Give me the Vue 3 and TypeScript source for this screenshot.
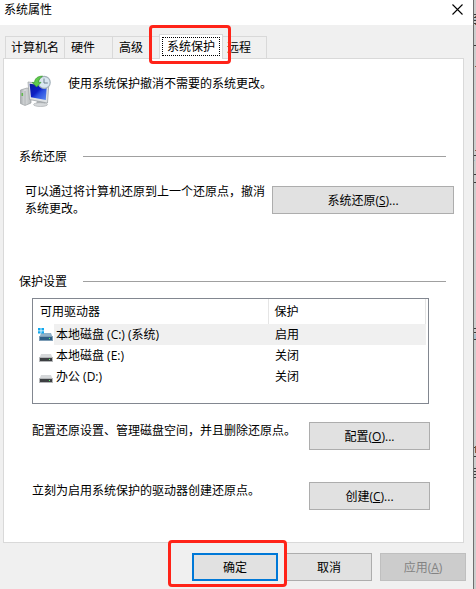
<script setup lang="ts">
import { ref } from 'vue'

interface Drive {
  name: string
  status: string
  system: boolean
}

const tabs: string[] = ['计算机名', '硬件', '高级', '系统保护', '远程']
const activeTab = ref(3)

const drives: Drive[] = [
  { name: '本地磁盘 (C:) (系统)', status: '启用', system: true },
  { name: '本地磁盘 (E:)', status: '关闭', system: false },
  { name: '办公 (D:)', status: '关闭', system: false },
]
const selected = ref(0)
</script>

<template>
  <div class="screen" lang="zh-CN">
    <main class="window">
      <header class="titlebar">
        <h1 class="title">系统属性</h1>
        <button class="close" type="button" aria-label="关闭">
          <svg width="11" height="11" viewBox="0 0 11 11">
            <path d="M0.5 0.5L10.5 10.5M10.5 0.5L0.5 10.5" fill="none" stroke="#000" stroke-width="1.1" />
          </svg>
        </button>
      </header>

      <nav class="tabs" role="tablist">
        <button
          v-for="(tab, i) in tabs"
          :key="tab"
          class="tab"
          :class="{ active: i === activeTab }"
          type="button"
          role="tab"
          :aria-selected="i === activeTab"
          @click="activeTab = i"
        >
          <span class="tab-label">{{ tab }}</span>
          <span v-if="i === 3" class="mark mark-tab"></span>
        </button>
      </nav>

      <section class="panel" role="tabpanel">
        <div class="intro">
          <svg width="32" height="32" viewBox="0 0 32 32">
            <defs>
              <linearGradient id="scr" x1="0" y1="0" x2="1" y2="1">
                <stop offset="0" stop-color="#0a1a9c" />
                <stop offset="0.45" stop-color="#0c1fc4" />
                <stop offset="0.6" stop-color="#2a4fe0" />
                <stop offset="1" stop-color="#5f8cf0" />
              </linearGradient>
              <linearGradient id="box" x1="0" y1="0" x2="1" y2="0">
                <stop offset="0" stop-color="#a8acaf" />
                <stop offset="0.4" stop-color="#d9dcdd" />
                <stop offset="1" stop-color="#b4b8ba" />
              </linearGradient>
            </defs>
            <path d="M0.5 15L7 13L11 14V28L5 30.5L0.5 28.5Z" fill="url(#box)" stroke="#9a9ea1" stroke-width="0.7" />
            <path d="M5 16V30" stroke="#a2a6a9" stroke-width="0.8" />
            <rect x="1.5" y="18" width="1.6" height="3" fill="#62b84e" />
            <path d="M17 25L25 27V30L16 30Z" fill="#aeb2b5" />
            <ellipse cx="20.5" cy="29.6" rx="7" ry="1.9" fill="#d6d9db" stroke="#a4a8ab" stroke-width="0.6" />
            <path d="M8 7L28.8 9.5L27.5 28L9.5 24.5Z" fill="#dfe2e4" stroke="#a0a5a8" stroke-width="0.8" />
            <path d="M9.6 8.8L26.8 11L25.8 25L11 22.3Z" fill="url(#scr)" />
            <circle cx="24.2" cy="7.4" r="6" fill="#d9e6f0" stroke="#a3b0ba" stroke-width="1.2" />
            <path d="M24 3.5V8H27.8" fill="none" stroke="#71818f" stroke-width="1" />
            <path d="M22.5 1.2C17.6 1 14.6 3.8 14.6 7.4H12.2L16.6 12L21 7.4H18.6C18.6 4.8 19.8 3 22.5 1.2Z" fill="#5fca4c" stroke="#359a2c" stroke-width="0.7" />
          </svg>
          <p class="text">使用系统保护撤消不需要的系统更改。</p>
        </div>

        <h2 class="heading restore-heading">系统还原</h2>
        <div class="restore">
          <p class="text">可以通过将计算机还原到上一个还原点，撤消系统更改。</p>
          <button class="btn btn-wide" type="button">系统还原(<u>S</u>)...</button>
        </div>

        <h2 class="heading settings-heading">保护设置</h2>
        <div class="settings">
          <div class="drives">
            <table>
              <colgroup>
                <col class="col-icon" />
                <col class="col-name" />
                <col class="col-status" />
              </colgroup>
              <thead>
                <tr>
                  <th colspan="2" scope="col">可用驱动器</th>
                  <th scope="col">保护</th>
                </tr>
              </thead>
              <tbody>
                <tr
                  v-for="(drive, i) in drives"
                  :key="drive.name"
                  :class="{ selected: i === selected }"
                  @click="selected = i"
                >
                  <td class="icon-cell">
                    <svg width="16" height="16" viewBox="0 0 16 16">
                      <path
                        d="M3 6H13L14.5 10H1.5Z"
                        :fill="drive.system ? '#8fb0c8' : '#d6d8da'"
                      />
                      <rect x="1" y="9" width="14" height="5" rx="0.5" :fill="drive.system ? '#7d9db6' : '#b4b6b8'" />
                      <rect x="2" y="10" width="12" height="3" :fill="drive.system ? '#2f5f86' : '#3d3f42'" />
                      <rect x="11" y="11" width="1" height="1" fill="#59f36a" />
                      <path
                        v-if="drive.system"
                        d="M0 1H2.6V3.4H0ZM3.4 1H6V3.4H3.4ZM0 4.2H2.6V6.6H0ZM3.4 4.2H6V6.6H3.4Z"
                        fill="#10a8ee"
                      />
                    </svg>
                  </td>
                  <td class="name-cell">{{ drive.name }}</td>
                  <td class="status-cell">{{ drive.status }}</td>
                </tr>
              </tbody>
            </table>
          </div>
          <div class="action">
            <p class="text">配置还原设置、管理磁盘空间，并且删除还原点。</p>
            <button class="btn btn-mid" type="button">配置(<u>O</u>)...</button>
          </div>
          <div class="action">
            <p class="text">立刻为启用系统保护的驱动器创建还原点。</p>
            <button class="btn btn-mid" type="button">创建(<u>C</u>)...</button>
          </div>
        </div>
      </section>

      <footer class="footer">
        <span class="marked">
          <button class="btn btn-small primary" type="button">确定</button>
          <span class="mark mark-ok"></span>
        </span>
        <button class="btn btn-small" type="button">取消</button>
        <button class="btn btn-small" type="button" disabled>应用(<u>A</u>)</button>
      </footer>
    </main>

    <svg class="backdrop" width="2" height="589" viewBox="0 0 2 589" aria-hidden="true">
      <path
        d="M0 14h2v1h-2zM0 17h2v1h-2zM0 20h2v1h-2zM0 23h2v1h-2zM0 45h2v1h-2zM0 155h2v1h-2zM0 174h2v1h-2zM0 182h2v1h-2zM0 328h2v1h-2zM0 332h2v1h-2zM0 339h2v1h-2zM0 447h2v1h-2zM0 456h2v1h-2zM0 468h2v1h-2zM0 471h2v1h-2zM0 474h2v1h-2zM0 477h2v1h-2z"
        fill="#3c3c3c"
      />
      <path d="M1 16h1v1h-1zM1 24h1v1h-1zM1 66h1v1h-1zM1 150h1v1h-1zM1 446h1v7h-1z" fill="#8d5a40" />
      <path d="M0 19h2v1h-2zM0 160h1v1h-1zM0 334h2v5h-2z" fill="#a9bfcc" />
    </svg>
  </div>
</template>

<style>
body {
  margin: 0;
}
</style>

<style scoped>
.screen {
  display: flex;
  min-height: 100vh;
  background: linear-gradient(to right, #c0c0c0, #cecece);
  color: #000;
  font-family: 'Open Sans', 'Noto Sans CJK SC', sans-serif;
  font-size: 12px;
  line-height: 17px;
  overflow: hidden;
}

.window {
  flex: 1;
  min-width: 0;
  display: flex;
  flex-direction: column;
  background: #f0f0f0;
  border-right: 1px solid #6e6e6e;
}

.backdrop {
  flex: none;
  width: 2px;
}

.titlebar {
  display: flex;
  align-items: flex-start;
  justify-content: space-between;
  height: 25px;
  padding: 0 10px 0 4px;
  background: #fff;
}

.title {
  margin: 0;
  font-size: 12px;
  font-weight: 400;
  line-height: 19px;
}

.close {
  display: block;
  margin: 4px 0 0;
  padding: 0;
  border: 0;
  background: none;
  line-height: 0;
}

.tabs {
  display: flex;
  align-items: flex-end;
  margin-top: 9px;
  padding-left: 5px;
}

.tab {
  position: relative;
  height: 22px;
  padding: 0 17px 0 5px;
  border: 1px solid #d9d9d9;
  border-bottom: 0;
  background: #f0f0f0;
  color: inherit;
  font: inherit;
  white-space: nowrap;
}

.tab + .tab {
  border-left: 0;
  padding-left: 6px;
}

.tab:first-child {
  padding-right: 5px;
}

.tab:last-child {
  padding-right: 15px;
}

.tabs .tab.active {
  z-index: 1;
  height: 25px;
  margin: 0 -2px -1px;
  padding: 0 2px 1px;
  border-left: 1px solid #d9d9d9;
  background: #fff;
}

.tab.active .tab-label {
  display: block;
  padding: 0 4px;
  border: 1px dotted #000;
}

.mark {
  position: absolute;
  border: 3px solid #ff2318;
  border-radius: 4px;
  pointer-events: none;
}

.mark-tab {
  inset: -10px -9px -5px -11px;
}

.panel {
  flex: 1;
  margin: 0 9px 0 3px;
  border: 1px solid #d9d9d9;
  background: #fff;
}

.text {
  margin: 0;
}

.intro {
  display: flex;
  gap: 16px;
  padding: 16px 16px 0;
}

.heading {
  display: flex;
  align-items: center;
  gap: 16px;
  height: 18px;
  padding: 0 17px 0 15px;
  font-size: 12px;
  font-weight: 400;
}

.heading::after {
  content: '';
  flex: 1;
  height: 1px;
  background: #a0a0a0;
}

.restore-heading {
  margin: 40px 0 0;
}

.settings-heading {
  margin: 55px 0 0;
}

.restore {
  display: flex;
  align-items: flex-start;
  margin-top: 18px;
  padding: 0 9px 0 21px;
}

.restore .text {
  flex: 1;
}

.btn {
  flex: none;
  height: 28px;
  padding: 0;
  border: 1px solid #adadad;
  border-radius: 0;
  background: #e1e1e1;
  color: #000;
  font: inherit;
}

.btn-wide {
  width: 182px;
  margin-top: 3px;
}

.btn-mid {
  width: 121px;
}

.btn-small {
  width: 86px;
}

.btn.primary {
  border: 2px solid #0078d7;
}

.btn:disabled {
  border-color: #bfbfbf;
  background: #cccccc;
  color: #838383;
}

.settings {
  padding: 8px 34px 32px 28px;
}

.drives {
  height: 104px;
  border: 1px solid #828790;
  padding-right: 2px;
}

table {
  width: 100%;
  border-collapse: collapse;
  table-layout: fixed;
}

.col-icon {
  width: 21px;
}

.col-name {
  width: 214px;
}

th {
  height: 25px;
  padding: 0 7px;
  border-right: 1px solid #e5e5e5;
  font-weight: 400;
  text-align: left;
}

th + th {
  padding-left: 6px;
}

td {
  height: 21px;
  padding: 0;
}

.icon-cell svg {
  display: block;
  margin-left: 5px;
}

.name-cell {
  padding-left: 2px;
}

.status-cell {
  padding-left: 7px;
}

.selected .name-cell,
.selected .status-cell {
  background: #f0f0f0;
}

.action {
  display: flex;
  align-items: flex-start;
  justify-content: space-between;
  margin-top: 18px;
  margin-right: -1px;
}

.action + .action {
  margin-top: 32px;
}

.footer {
  display: flex;
  justify-content: flex-end;
  gap: 8px;
  padding: 10px 7px 8px;
}

.marked {
  position: relative;
  display: flex;
}

.mark-ok {
  inset: -13px -9px -6px -24px;
}
</style>
